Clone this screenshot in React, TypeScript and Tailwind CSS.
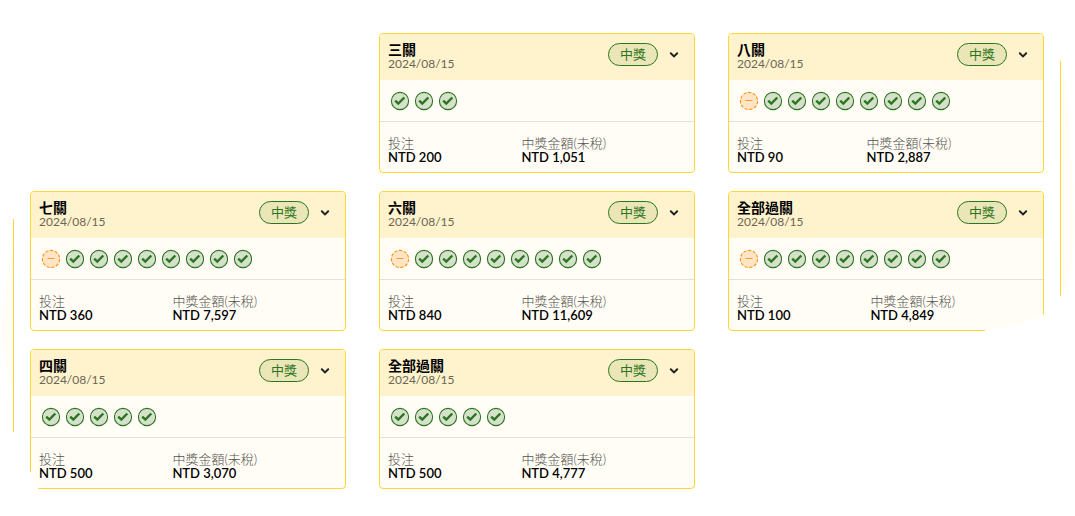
import clsx from 'clsx';

type Slip = {
  title: string;
  date: string;
  pushes: number;
  wins: number;
  stake: string;
  payout: string;
  place: string;
  cut?: 'left' | 'right';
};

const slips: Slip[] = [
  { title: '三關', date: '2024/08/15', pushes: 0, wins: 3, stake: 'NTD 200', payout: 'NTD 1,051', place: 'col-start-2' },
  { title: '八關', date: '2024/08/15', pushes: 1, wins: 8, stake: 'NTD 90', payout: 'NTD 2,887', place: 'col-start-3' },
  { title: '七關', date: '2024/08/15', pushes: 1, wins: 8, stake: 'NTD 360', payout: 'NTD 7,597', place: 'col-start-1' },
  { title: '六關', date: '2024/08/15', pushes: 1, wins: 8, stake: 'NTD 840', payout: 'NTD 11,609', place: 'col-start-2' },
  { title: '全部過關', date: '2024/08/15', pushes: 1, wins: 8, stake: 'NTD 100', payout: 'NTD 4,849', place: 'col-start-3', cut: 'right' },
  { title: '四關', date: '2024/08/15', pushes: 0, wins: 5, stake: 'NTD 500', payout: 'NTD 3,070', place: 'col-start-1', cut: 'left' },
  { title: '全部過關', date: '2024/08/15', pushes: 0, wins: 5, stake: 'NTD 500', payout: 'NTD 4,777', place: 'col-start-2' },
];

function WinIcon() {
  return (
    <svg viewBox="0 0 20 20" className="size-5" aria-hidden="true">
      <circle cx="10" cy="10" r="8.6" fill="#d6e1cb" stroke="#2b7520" strokeWidth="1.1" />
      <path d="M5.2 9.6 8.3 12.6 14.3 6.5" fill="none" stroke="#2b7520" strokeWidth="2.4" />
    </svg>
  );
}

function PushIcon() {
  return (
    <svg viewBox="0 0 20 20" className="size-5" aria-hidden="true">
      <circle cx="10" cy="10" r="8.6" fill="#ffe5c4" stroke="#ff8f0f" strokeWidth="1.1" strokeDasharray="3.4 1.5" />
      <path d="M6.5 9.5h7" stroke="#f59a3c" strokeWidth="1" />
    </svg>
  );
}

// White curves that trim the outer corners of the sheet
function CornerCut({ side }: { side: 'left' | 'right' }) {
  if (side === 'left') {
    return (
      <svg viewBox="0 0 8 17" className="absolute bottom-0 left-0 h-[17px] w-2" aria-hidden="true">
        <path d="M0 0H1C2 5 4 11 8 16V17H0Z" fill="#fff" />
      </svg>
    );
  }
  return (
    <svg viewBox="0 0 60 17" className="absolute right-0 bottom-0 h-[17px] w-[60px]" aria-hidden="true">
      <path d="M60 0 59 1C42 8 25 13 1 16V17H60Z" fill="#fff" />
    </svg>
  );
}

function SlipCard({ slip }: { slip: Slip }) {
  return (
    <article className={clsx('relative', slip.place)}>
      <div className="overflow-hidden rounded border border-[#fdd835] bg-[#fffdf5]">
        <header className="flex h-[46px] items-start justify-between bg-[#fff3cd] pt-[9px] pr-3 pl-2">
          <div>
            <h2 className="text-sm leading-[14px] font-bold text-black">{slip.title}</h2>
            <p className="text-xs leading-[13px] text-[#6b6655]">{slip.date}</p>
          </div>
          <div className="flex items-center gap-2">
            <span className="flex h-[23px] w-[50px] items-center justify-center rounded-full border border-[#2b7520] bg-[#ebe6b8] text-[13px] text-[#2b7520]">
              中獎
            </span>
            <button type="button" aria-label={slip.title} className="flex size-4 items-center justify-center">
              <svg viewBox="0 0 16 16" className="size-4" aria-hidden="true">
                <path d="M4.8 6.3 8 9.4l3.2-3.1" fill="none" stroke="#222" strokeWidth="2" strokeLinecap="round" />
              </svg>
            </button>
          </div>
        </header>
        <div className="flex h-[42px] items-center gap-1 border-b border-[#e3e1dc] pl-[10px]">
          {[...Array(slip.pushes)].map((_, i) => (
            <PushIcon key={i} />
          ))}
          {[...Array(slip.wins)].map((_, i) => (
            <WinIcon key={i} />
          ))}
        </div>
        <dl className="flex h-[50px] items-start px-2 pt-[14px] text-[13px] leading-[14px]">
          <div className="flex-auto">
            <dt className="font-light text-[#55534f]">投注</dt>
            <dd className="font-semibold text-black">{slip.stake}</dd>
          </div>
          <div className="flex-auto">
            <dt className="font-light text-[#55534f]">中獎金額(未稅)</dt>
            <dd className="font-semibold text-black">{slip.payout}</dd>
          </div>
        </dl>
      </div>
      {slip.cut && <CornerCut side={slip.cut} />}
    </article>
  );
}

export default function App() {
  return (
    <main className="relative min-h-screen overflow-hidden bg-white pt-[33px] pr-[31px] pb-6 pl-[30px] font-['Lato','Noto_Sans_CJK_TC',sans-serif]">
      <svg viewBox="0 0 14 213" className="absolute top-[219px] left-0 h-[213px] w-[14px]" aria-hidden="true">
        <path d="M13 8C11 45 1 85 1 116C1 135 8 150 13 176Z" fill="#fffdf5" />
        <path d="M13.5 0V213" stroke="#fdd835" />
      </svg>
      <svg viewBox="0 0 15 235" className="absolute top-[61px] right-0 h-[235px] w-[15px]" aria-hidden="true">
        <path d="M1 8C8 22 11 50 11 95C12 120 14 135 14 160C14 200 9 225 1 234Z" fill="#fffdf5" />
        <path d="M.5 0V235" stroke="#fdd835" />
      </svg>
      <div className="grid grid-cols-3 gap-x-[33px] gap-y-[18px]">
        {slips.map((slip, i) => (
          <SlipCard key={i} slip={slip} />
        ))}
      </div>
    </main>
  );
}
